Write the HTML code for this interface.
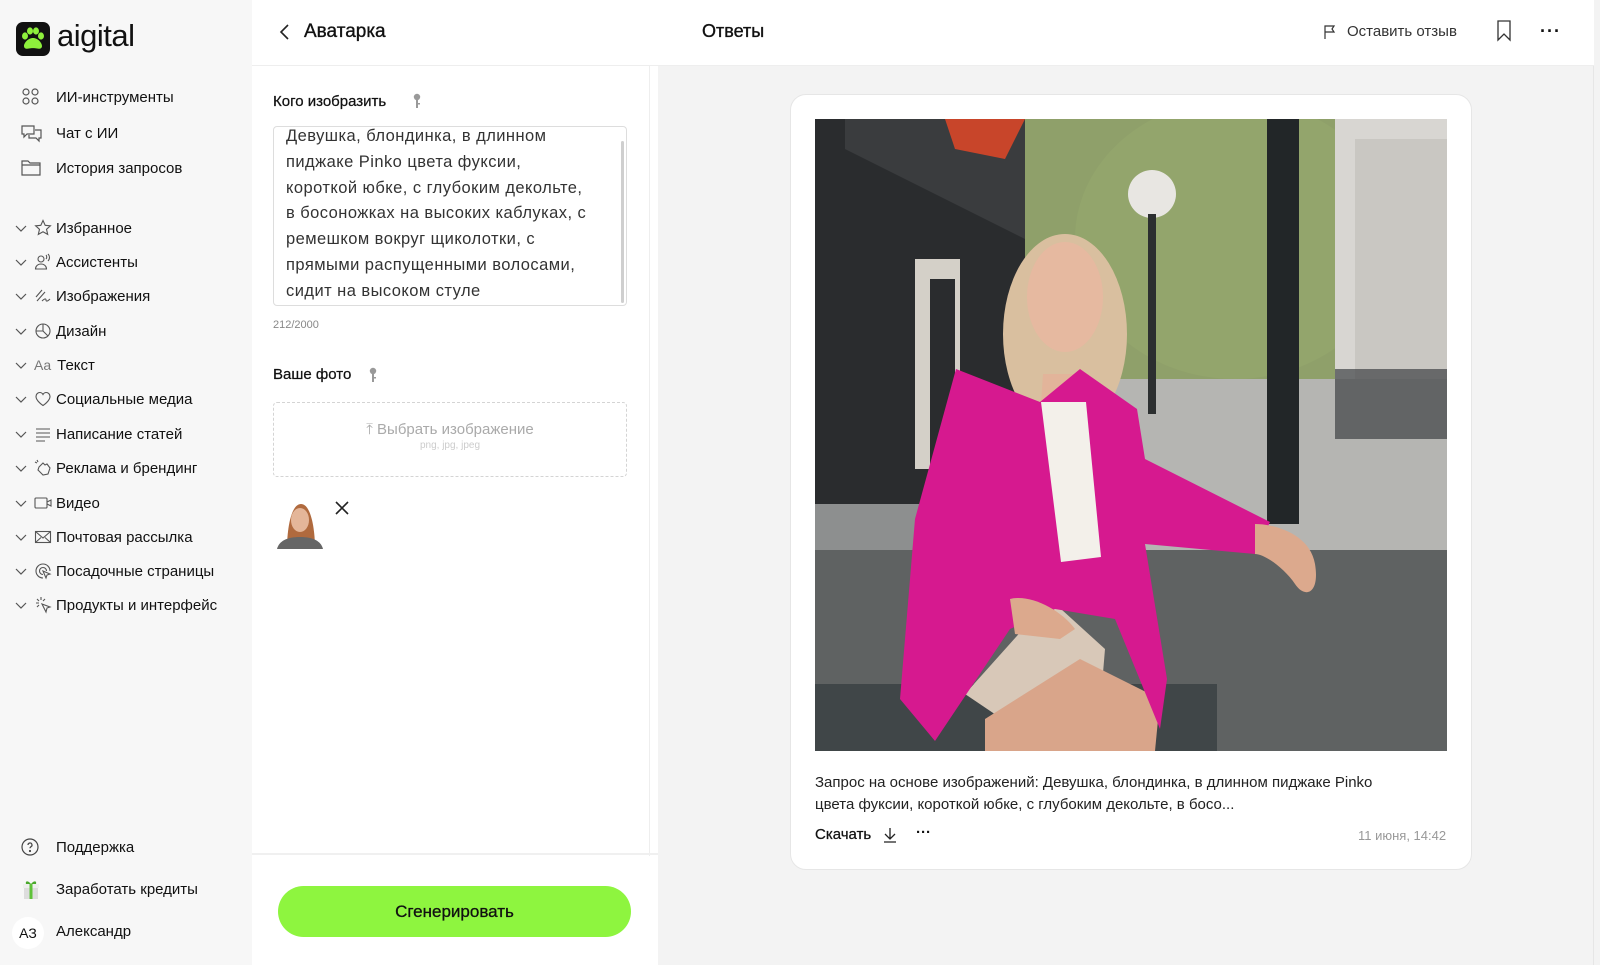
<!DOCTYPE html>
<html><head><meta charset="utf-8"><style>
*{box-sizing:border-box;margin:0;padding:0}
body{width:1600px;height:965px;overflow:hidden;font-family:"Liberation Sans","DejaVu Sans",sans-serif;color:#111;background:#f3f3f3;position:relative}
.abs{position:absolute}
#side{left:0;top:0;width:252px;height:965px;background:#f7f7f7}
.nav{position:absolute;left:20px;font-size:15px;display:flex;align-items:center;gap:14px;height:20px}
.nav svg{width:22px;height:20px}
.cat{position:absolute;left:14px;font-size:15px;display:flex;align-items:center;height:20px}
.cat .chev{width:14px;height:14px;margin-right:6px}
.cat .ic{width:18px;height:18px;margin-right:4px}
#mid{left:252px;top:0;width:406px;height:965px;background:#fff}
#right{left:658px;top:0;width:936px;height:965px;background:#f3f3f3;border-right:1px solid #e6e6e6}
</style></head><body>
<div id="side" class="abs">
  <div class="abs" style="left:16px;top:22px;width:34px;height:34px;background:#111;border-radius:7px">
    <svg width="34" height="34" viewBox="0 0 34 34"><g fill="#8ef03c"><ellipse cx="9" cy="14" rx="3" ry="3.6"/><ellipse cx="14" cy="9" rx="3" ry="3.6"/><ellipse cx="20" cy="9" rx="3" ry="3.6"/><ellipse cx="25" cy="14" rx="3" ry="3.6"/><path d="M17 16c-5 0-9 5-9 8 0 3 3 3 5 2.5s6-.5 8 0 5 .5 5-2.5c0-3-4-8-9-8z"/></g></svg>
  </div>
  <div class="abs" style="left:57px;top:18px;font-size:31px;font-weight:500;letter-spacing:-0.5px">aigital</div>
  <div class="nav" style="top:87px"><svg viewBox="0 0 22 20" fill="none" stroke="#555" stroke-width="1.2"><circle cx="6" cy="5" r="3"/><circle cx="15" cy="5" r="3"/><circle cx="6" cy="14" r="3"/><circle cx="15" cy="14" r="3"/></svg>ИИ-инструменты</div>
  <div class="nav" style="top:123px"><svg viewBox="0 0 22 20" fill="none" stroke="#555" stroke-width="1.2"><path d="M2 3h12v8H7l-3 3v-3H2z"/><path d="M9 12v3h7l3 3v-3h2V7h-6"/></svg>Чат с ИИ</div>
  <div class="nav" style="top:158px"><svg viewBox="0 0 22 20" fill="none" stroke="#555" stroke-width="1.2"><path d="M2 3h6l2 2h10v12H2z"/><path d="M2 7h18"/></svg>История запросов</div>

  <div class="cat" style="top:218px"><svg class="chev" viewBox="0 0 14 14"><path d="M2 5l5 5 5-5" fill="none" stroke="#555" stroke-width="1.2"/></svg><svg class="ic" viewBox="0 0 18 18"><path d="M9 1.5l2.2 4.8 5.2.5-3.9 3.5 1.2 5.1L9 12.8l-4.7 2.6 1.2-5.1L1.6 6.8l5.2-.5z" fill="none" stroke="#555" stroke-width="1.1"/></svg>Избранное</div>
  <div class="cat" style="top:252px"><svg class="chev" viewBox="0 0 14 14"><path d="M2 5l5 5 5-5" fill="none" stroke="#555" stroke-width="1.2"/></svg><svg class="ic" viewBox="0 0 18 18" fill="none" stroke="#555" stroke-width="1.1"><circle cx="7" cy="6" r="3"/><path d="M1.5 16c0-3 2.5-5 5.5-5s5.5 2 5.5 5z"/><path d="M12 2c1 1 1 3 0 4M14 1c2 2 2 5 0 7"/></svg>Ассистенты</div>
  <div class="cat" style="top:286px"><svg class="chev" viewBox="0 0 14 14"><path d="M2 5l5 5 5-5" fill="none" stroke="#555" stroke-width="1.2"/></svg><svg class="ic" viewBox="0 0 18 18" fill="none" stroke="#555" stroke-width="1.1"><path d="M2 10l6-7M3 14l8-9M8 14c2-2 4-3 4-1s2 1 4-1"/></svg>Изображения</div>
  <div class="cat" style="top:321px"><svg class="chev" viewBox="0 0 14 14"><path d="M2 5l5 5 5-5" fill="none" stroke="#555" stroke-width="1.2"/></svg><svg class="ic" viewBox="0 0 18 18" fill="none" stroke="#555" stroke-width="1.1"><circle cx="9" cy="9" r="7"/><path d="M2 9h7V2M9 9l5 5"/></svg>Дизайн</div>
  <div class="cat" style="top:355px"><svg class="chev" viewBox="0 0 14 14"><path d="M2 5l5 5 5-5" fill="none" stroke="#555" stroke-width="1.2"/></svg><span style="color:#777;font-size:14px;margin-right:6px">Aa</span>Текст</div>
  <div class="cat" style="top:389px"><svg class="chev" viewBox="0 0 14 14"><path d="M2 5l5 5 5-5" fill="none" stroke="#555" stroke-width="1.2"/></svg><svg class="ic" viewBox="0 0 18 18"><path d="M9 15.5S2 11 2 6.5C2 4 4 2.5 5.8 2.5 7.3 2.5 8.4 3.4 9 4.5 9.6 3.4 10.7 2.5 12.2 2.5 14 2.5 16 4 16 6.5 16 11 9 15.5 9 15.5z" fill="none" stroke="#555" stroke-width="1.1"/></svg>Социальные медиа</div>
  <div class="cat" style="top:424px"><svg class="chev" viewBox="0 0 14 14"><path d="M2 5l5 5 5-5" fill="none" stroke="#555" stroke-width="1.2"/></svg><svg class="ic" viewBox="0 0 18 18" stroke="#555" stroke-width="1.1"><path d="M2 4h14M2 8h14M2 12h14M2 16h9"/></svg>Написание статей</div>
  <div class="cat" style="top:458px"><svg class="chev" viewBox="0 0 14 14"><path d="M2 5l5 5 5-5" fill="none" stroke="#555" stroke-width="1.2"/></svg><svg class="ic" viewBox="0 0 18 18" fill="none" stroke="#555" stroke-width="1.1"><path d="M5 8l4-4 2 2 2-1 3 4-2 6-5 1-5-5z"/><path d="M1 3l2 1M3 1l1 2"/></svg>Реклама и брендинг</div>
  <div class="cat" style="top:493px"><svg class="chev" viewBox="0 0 14 14"><path d="M2 5l5 5 5-5" fill="none" stroke="#555" stroke-width="1.2"/></svg><svg class="ic" viewBox="0 0 18 18" fill="none" stroke="#555" stroke-width="1.1"><rect x="1" y="4" width="12" height="10" rx="1"/><path d="M13 8l4-2v6l-4-2"/></svg>Видео</div>
  <div class="cat" style="top:527px"><svg class="chev" viewBox="0 0 14 14"><path d="M2 5l5 5 5-5" fill="none" stroke="#555" stroke-width="1.2"/></svg><svg class="ic" viewBox="0 0 18 18" fill="none" stroke="#555" stroke-width="1.1"><rect x="1.5" y="3.5" width="15" height="11"/><path d="M1.5 3.5L9 10l7.5-6.5M1.5 14.5l5.5-5M16.5 14.5l-5.5-5"/></svg>Почтовая рассылка</div>
  <div class="cat" style="top:561px"><svg class="chev" viewBox="0 0 14 14"><path d="M2 5l5 5 5-5" fill="none" stroke="#555" stroke-width="1.2"/></svg><svg class="ic" viewBox="0 0 18 18" fill="none" stroke="#555" stroke-width="1.1"><path d="M9 16A7 7 0 1 1 16 9M9 12.5A3.5 3.5 0 1 1 12.5 9"/><path d="M9 9l7 3-3 1-1 3z"/></svg>Посадочные страницы</div>
  <div class="cat" style="top:595px"><svg class="chev" viewBox="0 0 14 14"><path d="M2 5l5 5 5-5" fill="none" stroke="#555" stroke-width="1.2"/></svg><svg class="ic" viewBox="0 0 18 18" fill="none" stroke="#555" stroke-width="1.1"><path d="M7 1v3M2 7h3M3 3l2 2M11 3L9 5M3 11l2-2"/><path d="M8 8l8 3-3 1-1 4z"/></svg>Продукты и интерфейс</div>

  <div class="nav" style="top:837px"><svg viewBox="0 0 22 20" fill="none" stroke="#444" stroke-width="1.2"><circle cx="10" cy="10" r="8"/><path d="M8 8a2 2 0 1 1 3 1.7c-.7.4-1 .8-1 1.6"/><circle cx="10" cy="14" r=".5" fill="#444"/></svg>Поддержка</div>
  <div class="nav" style="top:879px"><svg viewBox="0 0 22 22" style="height:22px"><rect x="4" y="9" width="14" height="12" fill="#ddd"/><rect x="3" y="6" width="16" height="4" fill="#eee"/><rect x="9.5" y="6" width="3" height="15" fill="#5fc23a"/><path d="M11 6c-3-4-6-3-5 0M11 6c3-4 6-3 5 0" fill="#4aa82c"/></svg>Заработать кредиты</div>
  <div class="abs" style="left:12px;top:917px;width:32px;height:32px;border-radius:50%;background:#fff;font-size:14px;display:flex;align-items:center;justify-content:center">АЗ</div>
  <div class="abs" style="left:56px;top:923px;font-size:15px">Александр</div>
</div>

<div id="mid" class="abs">
  <div class="abs" style="left:0;top:0;width:406px;height:66px;border-bottom:1px solid #eee"></div>
  <svg class="abs" style="left:26px;top:23px" width="14" height="18" viewBox="0 0 14 18"><path d="M10 2L3 9l7 7" fill="none" stroke="#222" stroke-width="1.6"/></svg>
  <div class="abs" style="left:52px;top:21px;font-size:19px;font-weight:500;-webkit-text-stroke:0.35px #111">Аватарка</div>
  <div class="abs" style="left:397px;top:66px;width:1px;height:790px;background:#eee"></div>
  <div class="abs" style="left:21px;top:93px;font-size:15px;-webkit-text-stroke:0.25px #111">Кого изобразить</div>
  <svg class="abs" style="left:160px;top:93px" width="10" height="16" viewBox="0 0 10 16"><circle cx="5" cy="4" r="3.2" fill="#999"/><rect x="4" y="6" width="2" height="9" fill="#999"/><rect x="5" y="10" width="3" height="1.5" fill="#999"/></svg>
  <div class="abs" style="left:21px;top:126px;width:354px;height:180px;border:1px solid #ddd;border-radius:4px;overflow:hidden">
    <div style="padding:0 0 0 12px;margin-top:-3px;font-size:16.5px;line-height:25.8px;color:#333;white-space:nowrap;letter-spacing:0.45px">Девушка, блондинка, в длинном<br>пиджаке Pinko цвета фуксии,<br>короткой юбке, с глубоким декольте,<br>в босоножках на высоких каблуках, с<br>ремешком вокруг щиколотки, с<br>прямыми распущенными волосами,<br>сидит на высоком стуле</div>
    <div class="abs" style="right:2px;top:14px;width:3px;height:162px;background:#cfcfcf;border-radius:2px"></div>
  </div>
  <div class="abs" style="left:21px;top:319px;font-size:11px;color:#888">212/2000</div>
  <div class="abs" style="left:21px;top:366px;font-size:15px;-webkit-text-stroke:0.25px #111">Ваше фото</div>
  <svg class="abs" style="left:116px;top:367px" width="10" height="16" viewBox="0 0 10 16"><circle cx="5" cy="4" r="3.2" fill="#999"/><rect x="4" y="6" width="2" height="9" fill="#999"/><rect x="5" y="10" width="3" height="1.5" fill="#999"/></svg>
  <div class="abs" style="left:21px;top:402px;width:354px;height:75px;border:1px dashed #d4d4d4;border-radius:4px;text-align:center">
    <div style="margin-top:18px;font-size:15px;color:#aaa">⤒ Выбрать изображение</div>
    <div style="font-size:10px;color:#ccc;margin-top:2px">png, jpg, jpeg</div>
  </div>
  <svg class="abs" style="left:21px;top:498px" width="54" height="51" viewBox="0 0 54 51"><rect width="54" height="51" fill="#fff"/><path d="M14 51c0-20 4-45 14-45s14 25 14 45z" fill="#b06a3e"/><ellipse cx="27" cy="22" rx="9" ry="12" fill="#e4b699"/><path d="M4 51c2-8 10-12 23-12s21 4 23 12z" fill="#666"/></svg>
  <svg class="abs" style="left:82px;top:500px" width="16" height="16" viewBox="0 0 16 16"><path d="M2 2l12 12M14 2L2 14" stroke="#222" stroke-width="1.6"/></svg>
  <div class="abs" style="left:0;top:853px;width:406px;height:2px;background:#f0f0f0"></div>
  <div class="abs" style="left:26px;top:886px;width:353px;height:51px;background:#8ef53f;border-radius:26px;display:flex;align-items:center;justify-content:center;font-size:17px;-webkit-text-stroke:0.3px #111">Сгенерировать</div>
</div>

<div id="right" class="abs">
  <div class="abs" style="left:0;top:0;width:936px;height:66px;background:#fff;border-bottom:1px solid #eee"></div>
  <div class="abs" style="left:44px;top:21px;font-size:18px;-webkit-text-stroke:0.35px #111">Ответы</div>
  <svg class="abs" style="left:665px;top:24px" width="14" height="16" viewBox="0 0 14 16"><path d="M2 15V2h9l-2 3 2 3H2" fill="none" stroke="#333" stroke-width="1.2"/></svg>
  <div class="abs" style="left:689px;top:23px;font-size:15px;color:#333">Оставить отзыв</div>
  <svg class="abs" style="left:838px;top:20px" width="16" height="22" viewBox="0 0 16 22"><path d="M2 1h12v19l-6-6-6 6z" fill="none" stroke="#333" stroke-width="1.3"/></svg>
  <div class="abs" style="left:882px;top:21px;font-size:18px;letter-spacing:1px;font-weight:bold">···</div>

  <div class="abs" style="left:132px;top:94px;width:682px;height:776px;background:#fff;border:1px solid #e6e6e6;border-radius:16px"></div>
  <svg class="abs" style="left:157px;top:119px" width="632" height="632" viewBox="0 0 632 632">
    <rect width="632" height="632" fill="#b8b8b4"/>
    <rect x="180" y="0" width="400" height="285" fill="#8fa06a"/>
    <ellipse cx="420" cy="120" rx="160" ry="140" fill="#93a56c"/>
    <rect x="520" y="0" width="112" height="270" fill="#d8d6d2"/>
    <rect x="540" y="20" width="92" height="240" fill="#c9c7c2"/>
    <rect x="0" y="260" width="632" height="175" fill="#b5b5b2"/>
    <rect x="520" y="250" width="112" height="70" fill="#3e4145" opacity=".7"/>
    <rect x="0" y="0" width="210" height="390" fill="#2a2c2e"/>
    <path d="M30 0h180l0 120-180-90z" fill="#3a3c3e"/>
    <rect x="100" y="140" width="45" height="210" fill="#d4d0c8"/>
    <rect x="115" y="160" width="25" height="190" fill="#2a2c2e"/>
    <path d="M130 0h80l-20 40-50-10z" fill="#c8452a"/>
    <rect x="0" y="385" width="200" height="50" fill="#8d8f8f"/>
    <rect x="452" y="0" width="32" height="405" fill="#222628"/>
    <circle cx="337" cy="75" r="24" fill="#e8e6e2"/>
    <rect x="333" y="95" width="8" height="200" fill="#2c2f30"/>
    <rect x="0" y="431" width="632" height="201" fill="#5f6262"/>
    <rect x="0" y="565" width="402" height="67" fill="#404648"/>
    <ellipse cx="250" cy="215" rx="62" ry="100" fill="#d9bf9f"/>
    <ellipse cx="250" cy="178" rx="38" ry="55" fill="#e6b9a0"/>
    <path d="M228 255h46l6 60h-56z" fill="#e2b49a"/>
    <path d="M226 283h45l10 160-40 5z" fill="#f3f0ea"/>
    <path d="M150 575l85-95 55 50-5 60-95 12z" fill="#d8c8b8"/>
    <path d="M170 600l95-60 80 40-5 52h-170z" fill="#d9a58a"/>
    <path d="M141 250l-41 150-15 180 35 42 75-112 45-20 60 10 45 110 7-50-22-135 110 10 15-32-125-63-8-50-57-40-40 33z" fill="#d6198f"/>
    <path d="M226 283l20 160 40-5-15-155" fill="#f3f0ea"/>
    <path d="M440 405c20 0 55 10 60 40s-10 35-20 20-30-30-40-30z" fill="#dca98d"/>
    <path d="M195 480c20-5 50 10 65 30l-15 10-45-5z" fill="#dca98d"/>
  </svg>
  <div class="abs" style="left:157px;top:772px;font-size:15px;line-height:21.5px;color:#222;white-space:nowrap">Запрос на основе изображений: Девушка, блондинка, в длинном пиджаке Pinko<br>цвета фуксии, короткой юбке, с глубоким декольте, в босо...</div>
  <div class="abs" style="left:157px;top:826px;font-size:15px;-webkit-text-stroke:0.25px #111">Скачать</div>
  <svg class="abs" style="left:225px;top:827px" width="14" height="16" viewBox="0 0 14 16"><path d="M7 1v11M2 7l5 5 5-5M1 15h12" fill="none" stroke="#222" stroke-width="1.3"/></svg>
  <div class="abs" style="left:258px;top:824px;font-size:15px;font-weight:bold">···</div>
  <div class="abs" style="left:700px;top:828px;font-size:13px;color:#999">11 июня, 14:42</div>
</div>
</body></html>
